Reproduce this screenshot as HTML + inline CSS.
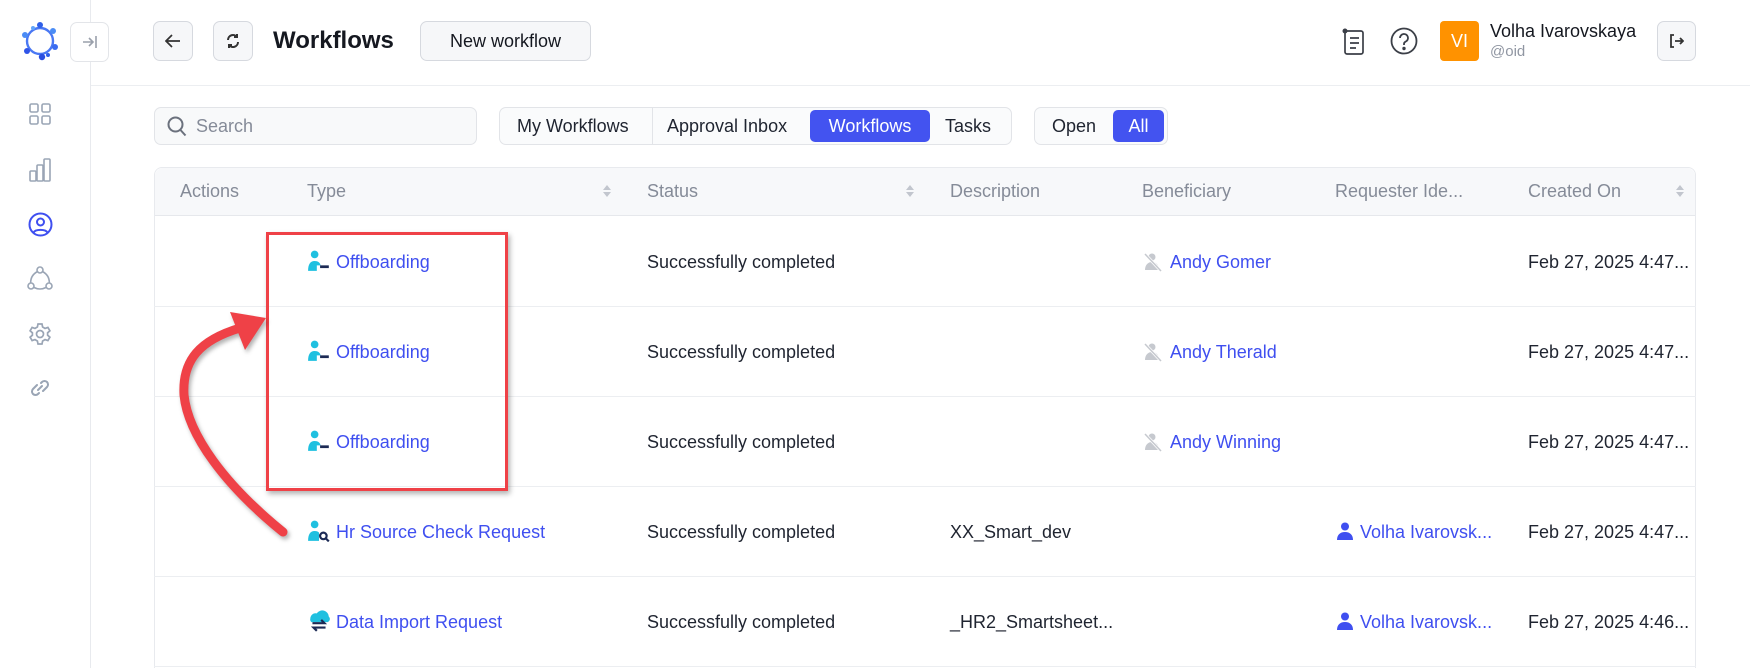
<!DOCTYPE html>
<html style="overflow:hidden;height:668px"><head><meta charset="utf-8"><style>
*{box-sizing:border-box;margin:0;padding:0}
body{width:1750px;height:668px;overflow:hidden;background:#fff;font-family:"Liberation Sans",sans-serif;color:#1f2430;position:relative}
.abs{position:absolute}
.btn{position:absolute;border:1px solid #d6d9df;border-radius:7px;background:#f6f7f9;display:flex;align-items:center;justify-content:center}
.th{position:absolute;top:181px;font-size:18px;color:#858b98}
.cell{position:absolute;font-size:18px;white-space:nowrap}
.link{color:#3f4ff0}
.row{position:absolute;left:154px;width:1542px;height:1px;background:#eceef1}
.sort{position:absolute;top:183px;width:10px;height:16px}
</style></head><body>
<!-- sidebar -->
<div class="abs" style="left:90px;top:0;width:1px;height:668px;background:#e8eaee"></div>
<svg class="abs" style="left:20px;top:20px" width="40" height="42" viewBox="0 0 40 42">
<g fill="none" stroke="#3d6df0" stroke-width="2.4">
<circle cx="20" cy="21" r="13" stroke="#4a78f3"/>
</g>
<g fill="#2f5fe8"><circle cx="20" cy="5" r="3"/><circle cx="33" cy="11" r="3" fill="#4a8cf5"/><circle cx="35" cy="27" r="3" fill="#3b6cf0"/><circle cx="22" cy="37" r="3.2" fill="#2b4fe0"/><circle cx="7" cy="31" r="3" fill="#3054e8"/><circle cx="5" cy="15" r="3" fill="#4b8cf5"/>
<circle cx="13" cy="8" r="2" fill="#60a5fa"/><circle cx="28" cy="35" r="2"/></g></svg>
<div class="btn" style="left:70px;top:22px;width:39px;height:40px;background:#fff;border-color:#e3e5e9">
<svg width="16" height="14" viewBox="0 0 16 14"><path d="M1 7h10M7 3l4 4-4 4M14 1v12" stroke="#9aa0ab" stroke-width="1.6" fill="none"/></svg></div>
<svg class="abs" style="left:29px;top:103px" width="22" height="22" viewBox="0 0 22 22" fill="none" stroke="#9aa5b5" stroke-width="1.6"><rect x="1" y="1" width="8" height="8" rx="1.5"/><rect x="13" y="1" width="8" height="8" rx="1.5"/><rect x="1" y="13" width="8" height="8" rx="1.5"/><rect x="13" y="13" width="8" height="8" rx="1.5"/></svg>
<svg class="abs" style="left:29px;top:158px" width="24" height="24" viewBox="0 0 24 24" fill="none" stroke="#9aa5b5" stroke-width="1.6"><rect x="1" y="13" width="6" height="10" rx="1"/><rect x="8" y="7" width="6" height="16" rx="1"/><rect x="15" y="1" width="6" height="22" rx="1"/></svg>
<svg class="abs" style="left:28px;top:212px" width="25" height="25" viewBox="0 0 25 25" fill="none" stroke="#3f4ff0" stroke-width="2"><circle cx="12.5" cy="12.5" r="11"/><circle cx="12.5" cy="10" r="3.5"/><path d="M5.5 20.5c2-3.5 12-3.5 14 0"/></svg>
<svg class="abs" style="left:27px;top:266px" width="26" height="26" viewBox="0 0 26 26" fill="none" stroke="#9aa5b5" stroke-width="1.6"><circle cx="13" cy="4" r="3"/><circle cx="4" cy="20" r="3"/><circle cx="22" cy="20" r="3"/><path d="M10.5 5.5C6 8 3.5 12 3.7 17M15.5 5.5C20 8 22.5 12 22.3 17M7 21.5c4 2 8 2 12 0"/></svg>
<svg class="abs" style="left:28px;top:322px" width="24" height="24" viewBox="0 0 24 24" fill="none" stroke="#9aa5b5" stroke-width="1.7"><circle cx="12" cy="12" r="3.5"/><path d="M10 2h4l.6 3 2.4 1.4 2.9-1 2 3.4-2.3 2v2.4l2.3 2-2 3.4-2.9-1L14.6 19 14 22h-4l-.6-3-2.4-1.4-2.9 1-2-3.4 2.3-2v-2.4l-2.3-2 2-3.4 2.9 1L9.4 5z"/></svg>
<svg class="abs" style="left:29px;top:377px" width="22" height="22" viewBox="0 0 22 22" fill="none" stroke="#9aa5b5" stroke-width="2" stroke-linecap="round"><path d="M9 13l4-4M8 8l-4 4a3.5 3.5 0 0 0 5 5l1-1M14 14l4-4a3.5 3.5 0 0 0-5-5l-1 1"/></svg>
<!-- header -->
<div class="abs" style="left:91px;top:85px;width:1659px;height:1px;background:#eceef1"></div>
<div class="btn" style="left:153px;top:21px;width:40px;height:40px"><svg width="16" height="14" viewBox="0 0 16 14"><path d="M15 7H2M7 1L1 7l6 6" stroke="#333" stroke-width="1.7" fill="none"/></svg></div>
<div class="btn" style="left:213px;top:21px;width:40px;height:40px"><svg width="14" height="16" viewBox="0 0 14 16" fill="none" stroke="#333" stroke-width="2"><path d="M2 7a5 5 0 0 1 9-3M12 9a5 5 0 0 1-9 3"/><path d="M11 1v3H8M3 15v-3h3"/></svg></div>
<div class="abs" style="left:273px;top:27px;font-size:24px;font-weight:bold;color:#151820">Workflows</div>
<div class="btn" style="left:420px;top:21px;width:171px;height:40px;font-size:18px;color:#151820">New workflow</div>
<svg class="abs" style="left:1342px;top:28px" width="24" height="28" viewBox="0 0 24 28" fill="none" stroke="#3b3f47" stroke-width="1.7"><rect x="3" y="3" width="18" height="23" rx="2"/><path d="M8 10h9M8 15h9M8 20h6"/><circle cx="3" cy="3" r="2.5" fill="#3b3f47" stroke="none"/></svg>
<svg class="abs" style="left:1390px;top:27px" width="28" height="28" viewBox="0 0 28 28" fill="none" stroke="#3b3f47" stroke-width="1.8"><circle cx="14" cy="14" r="12.5"/><path d="M10 11a4 4 0 1 1 5.5 3.7c-1 .5-1.5 1.2-1.5 2.3v1"/><circle cx="14" cy="21.5" r=".8" fill="#3b3f47"/></svg>
<div class="abs" style="left:1440px;top:21px;width:39px;height:40px;background:#ff9200;border-radius:4px;color:#fff;font-size:18px;display:flex;align-items:center;justify-content:center">VI</div>
<div class="abs" style="left:1490px;top:21px;font-size:18px;color:#151820">Volha Ivarovskaya</div>
<div class="abs" style="left:1490px;top:43px;font-size:15px;color:#9096a2">@oid</div>
<div class="btn" style="left:1657px;top:21px;width:39px;height:40px"><svg width="14" height="14" viewBox="0 0 14 14" fill="none" stroke="#333" stroke-width="1.8"><path d="M4 1H1v12h3M5 7h8M10 4l3 3-3 3"/></svg></div>
<!-- toolbar -->
<div class="abs" style="left:154px;top:107px;width:323px;height:38px;border:1px solid #e2e4e8;border-radius:7px;background:#f8f9fa"></div>
<svg class="abs" style="left:167px;top:116px" width="20" height="21" viewBox="0 0 20 21" fill="none" stroke="#6b717d" stroke-width="2"><circle cx="8.5" cy="8.5" r="7"/><path d="M13.5 14l5 5.5"/></svg>
<div class="abs" style="left:196px;top:116px;font-size:18px;color:#858b98">Search</div>
<div class="abs" style="left:499px;top:107px;width:513px;height:38px;border:1px solid #e2e4e8;border-radius:7px;background:#fafbfc"></div>
<div class="abs" style="left:517px;top:116px;font-size:18px">My Workflows</div>
<div class="abs" style="left:652px;top:108px;width:1px;height:36px;background:#e2e4e8"></div>
<div class="abs" style="left:667px;top:116px;font-size:18px">Approval Inbox</div>
<div class="abs" style="left:810px;top:110px;width:120px;height:32px;background:#4353f0;border-radius:5px;color:#fff;font-size:18px;display:flex;align-items:center;justify-content:center">Workflows</div>
<div class="abs" style="left:945px;top:116px;font-size:18px">Tasks</div>
<div class="abs" style="left:1034px;top:107px;width:134px;height:38px;border:1px solid #e2e4e8;border-radius:7px;background:#fafbfc"></div>
<div class="abs" style="left:1052px;top:116px;font-size:18px">Open</div>
<div class="abs" style="left:1113px;top:110px;width:51px;height:32px;background:#4353f0;border-radius:5px;color:#fff;font-size:18px;display:flex;align-items:center;justify-content:center">All</div>
<!-- table -->
<div class="abs" style="left:154px;top:167px;width:1542px;height:501px;border:1px solid #e8eaee;border-bottom:none;border-radius:8px 8px 0 0"></div>
<div class="abs" style="left:155px;top:168px;width:1540px;height:48px;background:#f7f8fa;border-radius:8px 8px 0 0;border-bottom:1px solid #e6e8ec"></div>
<div class="th" style="left:180px">Actions</div>
<div class="th" style="left:307px">Type</div>
<div class="th" style="left:647px">Status</div>
<div class="th" style="left:950px">Description</div>
<div class="th" style="left:1142px">Beneficiary</div>
<div class="th" style="left:1335px">Requester Ide...</div>
<div class="th" style="left:1528px">Created On</div>
<svg class="sort" style="left:602px" viewBox="0 0 10 16"><path d="M5 2l4 5H1zM5 14l4-5H1z" fill="#c2c6ce"/></svg>
<svg class="sort" style="left:905px" viewBox="0 0 10 16"><path d="M5 2l4 5H1zM5 14l4-5H1z" fill="#c2c6ce"/></svg>
<svg class="sort" style="left:1675px" viewBox="0 0 10 16"><path d="M5 2l4 5H1zM5 14l4-5H1z" fill="#c2c6ce"/></svg>
<div class="row" style="top:306px"></div><div class="row" style="top:396px"></div><div class="row" style="top:486px"></div><div class="row" style="top:576px"></div><div class="row" style="top:666px"></div>

<svg width="0" height="0" style="position:absolute"><defs>
<symbol id="off" viewBox="0 0 22 20"><circle cx="7" cy="4" r="3.5" fill="#1fc0e0"/><path d="M1 19c0-6 2-9 6-9 3 0 5 1.5 5.5 4H9v5z" fill="#1fc0e0"/><rect x="12" y="14" width="8" height="2.5" fill="#1c2a55"/></symbol>
<symbol id="noben" viewBox="0 0 20 20"><circle cx="9" cy="5" r="3.5" fill="#c6c9cf"/><path d="M2 18c0-5 3-8 7-8s7 3 7 8z" fill="#c6c9cf"/><path d="M2 2l16 17" stroke="#fff" stroke-width="3"/><path d="M2 2l16 17" stroke="#c6c9cf" stroke-width="1.5"/></symbol>
<symbol id="user" viewBox="0 0 16 18"><circle cx="8" cy="4.5" r="4" fill="#3f4ff0"/><path d="M0 18c0-5 3-8 8-8s8 3 8 8z" fill="#3f4ff0"/></symbol>
</defs></svg>

<svg class="abs" style="left:307px;top:250px" width="24" height="22"><use href="#off"/></svg>
<div class="cell link" style="left:336px;top:252px">Offboarding</div>
<div class="cell" style="left:647px;top:252px">Successfully completed</div>
<svg class="abs" style="left:1143px;top:252px" width="20" height="20"><use href="#noben"/></svg>
<div class="cell link" style="left:1170px;top:252px">Andy Gomer</div>
<div class="cell" style="left:1528px;top:252px">Feb 27, 2025 4:47...</div>

<svg class="abs" style="left:307px;top:340px" width="24" height="22"><use href="#off"/></svg>
<div class="cell link" style="left:336px;top:342px">Offboarding</div>
<div class="cell" style="left:647px;top:342px">Successfully completed</div>
<svg class="abs" style="left:1143px;top:342px" width="20" height="20"><use href="#noben"/></svg>
<div class="cell link" style="left:1170px;top:342px">Andy Therald</div>
<div class="cell" style="left:1528px;top:342px">Feb 27, 2025 4:47...</div>

<svg class="abs" style="left:307px;top:430px" width="24" height="22"><use href="#off"/></svg>
<div class="cell link" style="left:336px;top:432px">Offboarding</div>
<div class="cell" style="left:647px;top:432px">Successfully completed</div>
<svg class="abs" style="left:1143px;top:432px" width="20" height="20"><use href="#noben"/></svg>
<div class="cell link" style="left:1170px;top:432px">Andy Winning</div>
<div class="cell" style="left:1528px;top:432px">Feb 27, 2025 4:47...</div>

<svg class="abs" style="left:307px;top:520px" width="24" height="22" viewBox="0 0 22 20"><circle cx="7" cy="4" r="3.5" fill="#1fc0e0"/><path d="M1 19c0-6 2-9 6-9 2 0 3 .5 4 1.5V19z" fill="#1fc0e0"/><circle cx="15" cy="14.5" r="3" fill="none" stroke="#1c2a55" stroke-width="2"/><path d="M17 16.5l3 3" stroke="#1c2a55" stroke-width="2"/></svg>
<div class="cell link" style="left:336px;top:522px">Hr Source Check Request</div>
<div class="cell" style="left:647px;top:522px">Successfully completed</div>
<div class="cell" style="left:950px;top:522px">XX_Smart_dev</div>
<svg class="abs" style="left:1337px;top:522px" width="16" height="18"><use href="#user"/></svg>
<div class="cell link" style="left:1360px;top:522px">Volha Ivarovsk...</div>
<div class="cell" style="left:1528px;top:522px">Feb 27, 2025 4:47...</div>

<svg class="abs" style="left:307px;top:609px" width="24" height="24" viewBox="0 0 22 22"><path d="M3 9a5 5 0 0 1 6-5 6 6 0 0 1 11 3 3 3 0 0 1-1 5H4a3 3 0 0 1-1-3z" fill="#1fc0e0"/><path d="M5 13h11l-3-3M17 17H6l3 3" stroke="#1c2a55" stroke-width="2" fill="none"/></svg>
<div class="cell link" style="left:336px;top:612px">Data Import Request</div>
<div class="cell" style="left:647px;top:612px">Successfully completed</div>
<div class="cell" style="left:950px;top:612px">_HR2_Smartsheet...</div>
<svg class="abs" style="left:1337px;top:612px" width="16" height="18"><use href="#user"/></svg>
<div class="cell link" style="left:1360px;top:612px">Volha Ivarovsk...</div>
<div class="cell" style="left:1528px;top:612px">Feb 27, 2025 4:46...</div>

<!-- annotation -->
<div class="abs" style="left:266px;top:232px;width:242px;height:259px;border:3px solid #ef4147;box-shadow:2px 3px 5px rgba(0,0,0,.3)"></div>
<svg class="abs" style="left:0;top:0" width="600" height="668" viewBox="0 0 600 668">
<g style="filter:drop-shadow(2px 3px 2px rgba(0,0,0,.3))">
<path d="M283 532C225 485 188 435 184 395C182 360 200 340 240 328" fill="none" stroke="#ef4147" stroke-width="9" stroke-linecap="round"/>
<path d="M266 318L230 312L245 350Z" fill="#ef4147"/>
</g></svg>
</body></html>
